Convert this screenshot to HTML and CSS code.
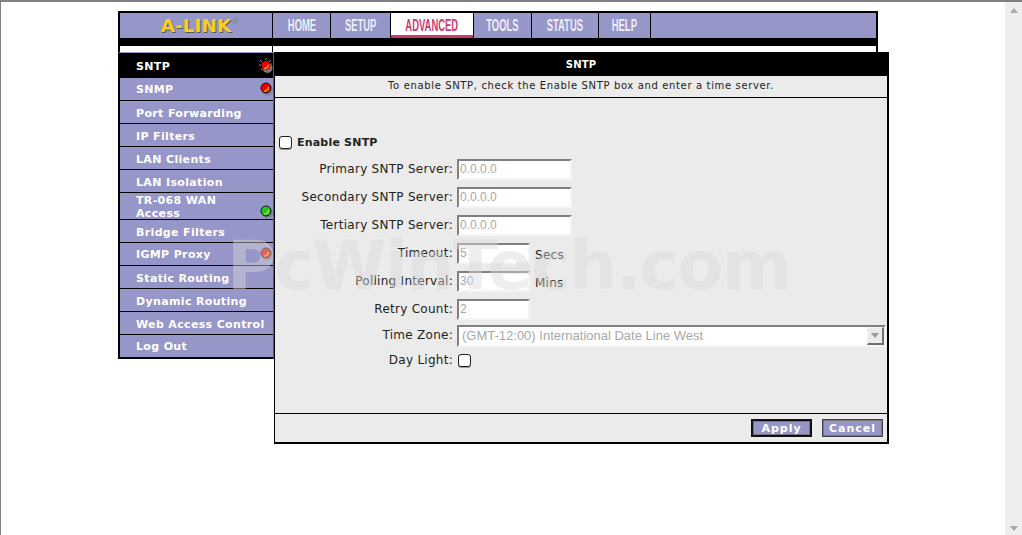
FILE: index.html
```html
<!DOCTYPE html>
<html lang="en">
<head>
    <meta charset="UTF-8">
    <title>A-LINK SNTP</title>
    <link rel="stylesheet" href="styles.css">
</head>
<body>

    <div class="page">
        <div class="wrap">
            <div class="topbar">
                <div class="logo">A-LINK<span class="reg">®</span></div>
                <a class="tab tab-home"><span>HOME</span></a>
                <a class="tab tab-setup"><span>SETUP</span></a>
                <a class="tab tab-advanced active"><span>ADVANCED</span></a>
                <a class="tab tab-tools"><span>TOOLS</span></a>
                <a class="tab tab-status"><span>STATUS</span></a>
                <a class="tab tab-help"><span>HELP</span></a>
                <div class="tab-fill"></div>
            </div>
            <div class="strip">
                <div class="strip-left"></div>
                <div class="strip-right"></div>
            </div>

            <div class="content">
                <div class="sidebar">
                    <a class="item current">SNTP
                        <svg class="led" width="16" height="16" viewBox="0 0 16 16">
                            <circle cx="9.5" cy="10" r="5" fill="#777"/>
                            <path d="M8 0v2M1 7h2M2 2l2 2M13 2l-2 2M14 6h-1M3 12l1-1" stroke="#889" stroke-width="1"/>
                            <circle cx="8" cy="7.5" r="4.5" fill="#ee0000"/>
                            <path d="M6 10.5a4 4 0 0 0 4.5-4" stroke="#f59a10" stroke-width="1.5" fill="none"/>
                        </svg>
                    </a>
                    <a class="item item-up">SNMP
                        <svg class="led" width="16" height="16" viewBox="0 0 16 16">
                            <circle cx="9.5" cy="10" r="5.5" fill="#8084a0"/>
                            <circle cx="8" cy="8" r="5" fill="#ee0000" stroke="#111" stroke-width="1"/>
                            <path d="M6 11a4 4 0 0 0 4.5-4" stroke="#f59a10" stroke-width="1.5" fill="none"/>
                        </svg>
                    </a>
                    <a class="item">Port Forwarding</a>
                    <a class="item">IP Filters</a>
                    <a class="item">LAN Clients</a>
                    <a class="item">LAN Isolation</a>
                    <a class="item item-tall"><span>TR-068 WAN<br>Access</span>
                        <svg class="led led-low" width="16" height="16" viewBox="0 0 16 16">
                            <circle cx="9.5" cy="10" r="5.5" fill="#8084a0"/>
                            <circle cx="8" cy="8" r="5" fill="#22c522" stroke="#111" stroke-width="1"/>
                            <path d="M6 11a4 4 0 0 0 4.5-4" stroke="#8fe04a" stroke-width="1.5" fill="none"/>
                        </svg>
                    </a>
                    <a class="item">Bridge Filters</a>
                    <a class="item item-up">IGMP Proxy
                        <svg class="led" width="16" height="16" viewBox="0 0 16 16">
                            <circle cx="9.5" cy="10" r="5.5" fill="#8084a0"/>
                            <circle cx="8" cy="8" r="5" fill="#ee0000" stroke="#111" stroke-width="1"/>
                            <path d="M6 11a4 4 0 0 0 4.5-4" stroke="#f59a10" stroke-width="1.5" fill="none"/>
                        </svg>
                    </a>
                    <a class="item">Static Routing</a>
                    <a class="item">Dynamic Routing</a>
                    <a class="item">Web Access Control</a>
                    <a class="item item-up">Log Out</a>
                </div>

                <div class="panel">
                    <div class="panel-title">SNTP</div>
                    <div class="panel-desc">To enable SNTP, check the Enable SNTP box and enter a time server.</div>
                    <div class="panel-body">
                        <div class="enable-row">
                            <input type="checkbox" class="check">
                            <b>Enable SNTP</b>
                        </div>
                        <div class="row">
                            <label>Primary SNTP Server:</label>
                            <input class="field" type="text" value="0.0.0.0" disabled>
                        </div>
                        <div class="row">
                            <label>Secondary SNTP Server:</label>
                            <input class="field" type="text" value="0.0.0.0" disabled>
                        </div>
                        <div class="row">
                            <label>Tertiary SNTP Server:</label>
                            <input class="field" type="text" value="0.0.0.0" disabled>
                        </div>
                        <div class="row">
                            <label>Timeout:</label>
                            <input class="field field-small" type="text" value="5" disabled>
                            <span class="unit">Secs</span>
                        </div>
                        <div class="row">
                            <label>Polling Interval:</label>
                            <input class="field field-small" type="text" value="30" disabled>
                            <span class="unit">Mins</span>
                        </div>
                        <div class="row">
                            <label>Retry Count:</label>
                            <input class="field field-small" type="text" value="2" disabled>
                        </div>
                        <div class="row row-zone">
                            <label>Time Zone:</label>
                            <div class="select-box">
                                <span>(GMT-12:00) International Date Line West</span>
                                <div class="select-btn"><i></i></div>
                            </div>
                        </div>
                        <div class="row row-light">
                            <label>Day Light:</label>
                            <input type="checkbox" class="check check-small">
                        </div>
                    </div>
                    <div class="panel-foot">
                        <button class="btn btn-default">Apply</button>
                        <button class="btn">Cancel</button>
                    </div>
                </div>
            </div>
        </div>

        <div class="watermark">PcWinTech.com</div>
    </div>

    <div class="scrollbar">
        <i class="arrow-up"></i>
        <i class="arrow-down"></i>
    </div>

</body>
</html>
```

FILE: styles.css
```css
html, body {
    margin: 0;
    padding: 0;
    height: 100%;
    overflow: hidden;
}

body {
    box-sizing: border-box;
    display: flex;
    background: white;
    border-top: 2px solid #808080;
    border-left: 1px solid #808080;
    font-family: "DejaVu Sans", sans-serif;
    font-size: 12px;
    color: #222;
}

.page {
    position: relative;
    flex: 1;
}

.wrap {
    width: 760px;
    margin: 9px 0 0 117px;
}

/* top nav */
.topbar {
    display: flex;
    height: 25px;
    border: 2px solid black;
    border-bottom-width: 8px;
    background: #9696c8;
}

.logo {
    box-sizing: border-box;
    flex: 0 0 153px;
    padding-left: 8px;
    border-right: 1px solid black;
    text-align: center;
    font-family: "DejaVu Sans", sans-serif;
    font-weight: bold;
    font-size: 18.5px;
    line-height: 25px;
    color: #f7d021;
    text-shadow: 1px 1px 0 #5a5a50;
}

.reg {
    font-size: 8px;
    line-height: 0;
    vertical-align: 8px;
    color: #888;
    text-shadow: none;
}

.tab {
    box-sizing: border-box;
    display: flex;
    justify-content: center;
    align-items: center;
    padding-top: 1px;
    border-right: 1px solid black;
    color: #eeeef8;
    font-family: "Liberation Sans", sans-serif;
    font-size: 16px;
    font-weight: bold;
}

.tab span {
    display: inline-block;
    transform: scaleX(0.59);
}

.tab-home { width: 58px; }
.tab-setup { width: 60px; }
.tab-advanced { width: 83px; }
.tab-tools { width: 58px; }
.tab-status { width: 67px; }
.tab-help { width: 52px; }

.active {
    background: white;
    color: #cc3a70;
    box-shadow: inset 0 -3px 0 #cc3a70;
}

.tab-fill {
    flex: 1;
}

.strip {
    display: flex;
    height: 6px;
    border-left: 2px solid black;
    border-right: 2px solid black;
}

.strip-left {
    width: 152px;
    background: white;
    border-right: 1px solid black;
}

.strip-right {
    flex: 1;
    background: white;
}

/* sidebar + panel */
.content {
    display: flex;
    align-items: flex-start;
}

.sidebar {
    box-sizing: border-box;
    flex: 0 0 156px;
    border-left: 2px solid black;
    border-right: 1px solid #55558a;
    border-top: 1px solid #9696c8;
    border-bottom: 1px solid black;
}

.item {
    box-sizing: border-box;
    display: flex;
    justify-content: space-between;
    align-items: center;
    height: 23px;
    padding: 3px 0 0 16px;
    background: #9696c8;
    border-bottom: 1px solid black;
    color: white;
    font-size: 11px;
    font-weight: bold;
    letter-spacing: 0.35px;
    line-height: 13px;
}

.item-up {
    padding-top: 1px;
}

.current {
    height: 25px;
    background: black;
}

.item-tall {
    height: 27px;
    padding-top: 1px;
}

.led {
    flex-shrink: 0;
    margin: 0 -1px 4px 0;
}

.current .led {
    margin-bottom: 2px;
}

.led-low {
    align-self: flex-end;
    margin-bottom: 0;
}

.panel {
    box-sizing: border-box;
    flex: 0 0 615px;
    background: #ebebeb;
    border: 1px solid black;
    border-right-width: 2px;
    border-bottom-width: 2px;
}

.panel-title {
    height: 23px;
    line-height: 23px;
    background: black;
    color: white;
    text-align: center;
    font-size: 10px;
    font-weight: bold;
    letter-spacing: 0.2px;
}

.panel-desc {
    height: 21px;
    line-height: 20px;
    border-bottom: 1px solid black;
    text-align: center;
    font-size: 10px;
    letter-spacing: 0.64px;
}

.panel-body {
    box-sizing: border-box;
    height: 316px;
    padding-top: 33px;
    border-bottom: 1px solid black;
}

.enable-row {
    display: flex;
    align-items: center;
    gap: 5px;
    height: 24px;
    margin-top: -1px;
    margin-bottom: 1px;
    padding-left: 4px;
    font-size: 11px;
    letter-spacing: 0.2px;
}

.check {
    appearance: none;
    box-sizing: border-box;
    width: 13px;
    height: 13px;
    margin: 0;
    background: white;
    border: 1px solid #222;
    border-radius: 3px;
    box-shadow: 0 1px 0 #999;
}

.row {
    display: flex;
    align-items: center;
    height: 28px;
}

.row label {
    width: 178px;
    margin-right: 4px;
    text-align: right;
    letter-spacing: 0.27px;
    white-space: nowrap;
}

.field {
    box-sizing: border-box;
    width: 115px;
    height: 21px;
    margin: 0;
    padding: 0 1px;
    background: white;
    border: 2px solid;
    border-color: #808080 #f4f4f4 #f4f4f4 #808080;
    font-family: "Liberation Sans", sans-serif;
    font-size: 12px;
    color: #a8a8a8;
}

.field-small {
    width: 73px;
}

.unit {
    margin: 3px 0 0 5px;
    letter-spacing: 0.27px;
}

.row-zone {
    height: 26px;
}

.row-zone label {
    margin-bottom: 2px;
}

.row-light {
    height: 22px;
}

.check-small {
    margin-left: 1px;
}

.select-box {
    box-sizing: border-box;
    display: flex;
    justify-content: space-between;
    align-items: center;
    width: 429px;
    height: 22px;
    padding: 0 0 1px 3px;
    background: white;
    border: 2px solid;
    border-color: #808080 #f4f4f4 #f4f4f4 #808080;
    font-family: "Liberation Sans", sans-serif;
    font-size: 13px;
    color: #a8a8a8;
}

.select-btn {
    box-sizing: border-box;
    display: flex;
    justify-content: center;
    align-items: center;
    width: 17px;
    height: 18px;
    background: #ebebeb;
    border: 1px solid #f4f4f4;
    border-right: 2px solid #707070;
    border-bottom: 2px solid #707070;
}

.select-btn i {
    border: 4px solid transparent;
    border-top: 5px solid #999;
    border-bottom: 0;
}

.panel-foot {
    display: flex;
    justify-content: flex-end;
    align-items: center;
    gap: 10px;
    height: 28px;
    padding-right: 4px;
}

.btn {
    box-sizing: border-box;
    width: 61px;
    height: 18px;
    padding: 0;
    background: #9696c8;
    border: 1px solid #444;
    box-shadow: inset 0 0 0 1px #777;
    color: white;
    font-family: "DejaVu Sans", sans-serif;
    font-size: 11px;
    font-weight: bold;
    letter-spacing: 1px;
}

.btn-default {
    border: 2px solid #111;
}

/* over everything, washes out what is under it */
.watermark {
    position: absolute;
    left: 226px;
    top: 224px;
    font-family: "DejaVu Sans", sans-serif;
    font-size: 67px;
    font-weight: bold;
    letter-spacing: -1.6px;
    line-height: 80px;
    white-space: nowrap;
    color: rgba(217, 217, 217, 0.45);
    pointer-events: none;
}

.scrollbar {
    flex: 0 0 17px;
    box-sizing: border-box;
    display: flex;
    flex-direction: column;
    justify-content: space-between;
    align-items: center;
    padding: 6px 0 4px;
    background: #eeeeee;
}

.arrow-up {
    border: 4px solid transparent;
    border-bottom: 5px solid #aaa;
    border-top: 0;
}

.arrow-down {
    border: 4px solid transparent;
    border-top: 5px solid #aaa;
    border-bottom: 0;
}
```
